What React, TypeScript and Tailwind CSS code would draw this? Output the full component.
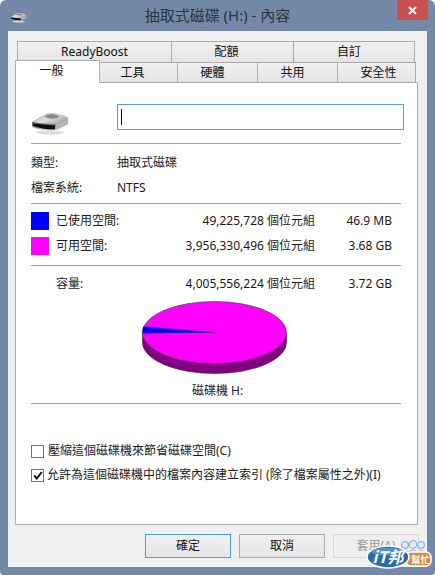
import React from "react";

const font = { fontFamily: '"Noto Sans", "Noto Sans CJK TC", sans-serif' };

function Drive({ w, h }: { w: number; h: number }) {
  return (
    <svg width={w} height={h} viewBox="0 0 38 26">
      <defs>
        <linearGradient id="dt" x1="0" y1="0" x2="1" y2="0.6">
          <stop offset="0" stopColor="#a0a0a0" />
          <stop offset="0.55" stopColor="#e0e0e0" />
          <stop offset="1" stopColor="#a8a8a8" />
        </linearGradient>
        <linearGradient id="df" x1="0" y1="0" x2="0" y2="1">
          <stop offset="0" stopColor="#a0a0a0" />
          <stop offset="0.5" stopColor="#5a5a5a" />
          <stop offset="1" stopColor="#c4c4c4" />
        </linearGradient>
        <filter id="db" x="-10%" y="-10%" width="120%" height="120%">
          <feGaussianBlur stdDeviation="0.35" />
        </filter>
      </defs>
      <g filter="url(#db)">
        <ellipse cx="19" cy="23.5" rx="14" ry="2" fill="#dcdcdc" />
        <path d="M1 13 L17 4 Q30 4 37 9 L37 15 L25 21 Q12 22 1 18 Z" fill="url(#df)" />
        <path d="M1 13 L17 4 Q30 4 37 9 L25 15 Q12 15 1 13 Z" fill="url(#dt)" />
        <path d="M25 15 L37 9 L37 15 L25 21 Z" fill="#b4b4b4" />
        <path d="M2 14.5 L24 16.5 L24 20.5 Q12 20.5 2 17 Z" fill="#0c0c0c" />
        <ellipse cx="21" cy="7.5" rx="7" ry="2.2" fill="#8a8b8b" />
      </g>
    </svg>
  );
}

function Pie() {
  return (
    <svg width="146" height="74" viewBox="0 0 146 74">
      <path d="M0.5 31.5 V41.5 A72 31 0 0 0 144.5 41.5 V31.5 Z" fill="#800080" stroke="#4a2a4a" strokeWidth="0.7" />
      <ellipse cx="72.5" cy="31.5" rx="72" ry="31" fill="#ff00ff" stroke="#5a4a5a" strokeWidth="0.7" />
      <path d="M72.5 31.5 L1.2 25.5 A72 31 0 0 0 0.6 32.5 Z" fill="#0000ff" />
      <path d="M72.5 31.5 L1.2 25.5" stroke="#3a3a6a" strokeWidth="0.5" />
      <path d="M72.5 31.5 L0.6 31.5" stroke="#3a3a6a" strokeWidth="0.5" />
    </svg>
  );
}

function Badge() {
  return (
    <svg width="68" height="36" viewBox="0 0 68 36">
      <g fill="#e3edf8" stroke="#8fb2d8" strokeWidth="1.2">
        <circle cx="39" cy="6" r="3.4" />
        <circle cx="47" cy="5.5" r="3.8" />
        <circle cx="55" cy="6" r="3.4" />
        <path d="M34 15 q5 -7 10 0 Z" />
        <path d="M42 15 q5 -8 10 0 Z" />
        <path d="M50 15 q5 -7 10 0 Z" />
      </g>
      <rect x="40" y="13" width="25" height="14" rx="5" fill="#d98a3c" stroke="#ffffff" strokeWidth="1.5" />
      <text x="54.5" y="24" textAnchor="middle" fontSize="9.5" fontWeight="700" fill="#ffffff" fontFamily='"Noto Sans CJK TC", sans-serif'>幫忙</text>
      <ellipse cx="22" cy="18" rx="21" ry="11" fill="#2a6ca8" stroke="#ffffff" strokeWidth="1.6" />
      <ellipse cx="21" cy="12.5" rx="16" ry="4" fill="#6ea6d8" opacity="0.6" />
      <text x="22" y="24" textAnchor="middle" fontSize="16" fontWeight="700" fontStyle="italic" fill="#ffffff" fontFamily='"Noto Sans CJK TC", sans-serif'>iT邦</text>
    </svg>
  );
}

const Sep = () => <div className="h-px bg-[#a0a0a0] mr-[16px]" />;

function Row({ color, label, bytes, size }: { color?: string; label: string; bytes: string; size: string }) {
  return (
    <div className="flex items-center h-[18px] text-[12px] text-[#1a1a1a]">
      <div className="w-[18px] h-[18px] shrink-0" style={color ? { backgroundColor: color } : undefined} />
      <div className="ml-[7px] w-[100px]">{label}</div>
      <div className="w-[159px] text-right whitespace-nowrap">{bytes}</div>
      <div className="w-[77px] text-right">{size}</div>
    </div>
  );
}

function Tab({ w, label, className = "" }: { w: string; label: string; className?: string }) {
  return (
    <div className={`${w} flex items-center justify-center border border-b-0 border-[#acacac] bg-gradient-to-b from-[#f0f0f0] to-[#e5e5e5] text-[12px] text-[#111] ${className}`}>
      {label}
    </div>
  );
}

function Btn({ label, className = "" }: { label: string; className?: string }) {
  return (
    <div className={`w-[86px] h-[24px] flex items-center justify-center border text-[12px] ${className}`}>
      {label}
    </div>
  );
}

export default function App() {
  return (
    <div style={font} className="relative w-[435px] h-[575px] bg-white overflow-hidden">
      <div className="w-[435px] h-[575px] bg-[#7389a7] rounded-t-[6px] rounded-b-[4px] px-[8px] pb-[8px] flex flex-col">
        <div className="relative h-[31px] shrink-0 flex items-center justify-center text-[15px] text-[#2b3540]">
          <div className="absolute left-[2px] top-[11px]"><Drive w={17} h={12} /></div>
          <span className="mt-[-1px]">抽取式磁碟 (H:) - 內容</span>
          <div className="absolute right-[-1px] top-0 w-[31px] h-[20px] bg-[#c75050] flex items-center justify-center">
            <svg width="9" height="9" viewBox="0 0 9 9"><path d="M1 1 L8 8 M8 1 L1 8" stroke="#fff" strokeWidth="2" /></svg>
          </div>
        </div>

        <div className="flex-1 bg-[#f0f0f0] flex flex-col px-[7px]">
          <div className="h-[10px] shrink-0" />
          <div className="flex h-[21px] pl-[2px] shrink-0">
            <Tab w="w-[155px]" label="ReadyBoost" />
            <Tab w="w-[123px] -ml-px" label="配額" className="pr-[12px]" />
            <Tab w="w-[122px] -ml-px" label="自訂" className="pr-[10px]" />
          </div>
          <div className="flex h-[20px] shrink-0 relative">
            <div className="relative z-10 w-[85px] h-[23px] -mt-[2px] pb-[3px] pr-[12px] flex items-center justify-center border border-b-0 border-[#acacac] bg-white text-[12px] text-[#111]">一般</div>
            <Tab w="w-[79px] -ml-px" label="工具" className="pr-[12px]" />
            <Tab w="w-[81px] -ml-px" label="硬體" className="pr-[10px]" />
            <Tab w="w-[81px] -ml-px" label="共用" className="pr-[10px]" />
            <Tab w="w-[79px] -ml-px" label="安全性" className="pl-[4px]" />
          </div>

          <div className="w-[403px] h-[443px] shrink-0 border border-[#acacac] bg-white pl-[15px] flex flex-col text-[12px] text-[#1a1a1a]">
            <div className="flex h-[60px] shrink-0 pt-[21px]">
              <div className="w-[86px] pt-[5px]"><Drive w={38} h={26} /></div>
              <div className="w-[287px] h-[26px] border border-[#569de5] flex items-center pl-[3px]">
                <div className="w-px h-[16px] bg-black" />
              </div>
            </div>
            <Sep />
            <div className="flex h-[25px] mt-[6px] items-center"><div className="w-[86px]">類型:</div><div>抽取式磁碟</div></div>
            <div className="flex h-[25px] items-center"><div className="w-[86px]">檔案系統:</div><div>NTFS</div></div>
            <div className="h-[3px]" />
            <Sep />
            <div className="mt-[8px]"><Row color="#0000ff" label="已使用空間:" bytes="49,225,728 個位元組" size="46.9 MB" /></div>
            <div className="mt-[7px]"><Row color="#ff00ff" label="可用空間:" bytes="3,956,330,496 個位元組" size="3.68 GB" /></div>
            <div className="h-[10px]" />
            <Sep />
            <div className="mt-[9px]"><Row label="容量:" bytes="4,005,556,224 個位元組" size="3.72 GB" /></div>
            <div className="flex justify-center mr-[16px] mt-[8px] h-[74px] pr-[3px]"><Pie /></div>
            <div className="text-center mr-[16px] mt-[7px] h-[18px] leading-[18px] pl-[3px]">磁碟機 H:</div>
            <div className="h-[3px]" />
            <Sep />
            <div className="flex items-center h-[14px] mt-[40px]">
              <div className="w-[13px] h-[13px] border border-[#707070] bg-white" />
              <div className="ml-[4px]">壓縮這個磁碟機來節省磁碟空間(C)</div>
            </div>
            <div className="flex items-center h-[14px] mt-[10px]">
              <div className="w-[13px] h-[13px] border border-[#707070] bg-white flex items-center justify-center">
                <svg width="10" height="9" viewBox="0 0 10 9"><path d="M1.2 4.5 L3.8 7.4 L8.8 1" fill="none" stroke="#111" strokeWidth="2" /></svg>
              </div>
              <div className="ml-[3px] whitespace-nowrap">允許為這個磁碟機中的檔案內容建立索引 (除了檔案屬性之外)(I)</div>
            </div>
          </div>

          <div className="flex justify-end gap-[8px] mt-[9px] mr-[1px]">
            <Btn label="確定" className="border-[#4b9be0] text-[#111] bg-gradient-to-b from-[#f0f0f0] to-[#e5e5e5]" />
            <Btn label="取消" className="border-[#acacac] text-[#111] bg-gradient-to-b from-[#f0f0f0] to-[#e5e5e5]" />
            <Btn label="套用(A)" className="border-[#d9d9d9] text-[#9a9a9a] bg-[#efefef]" />
          </div>
        </div>
      </div>
      <div className="absolute left-[366px] top-[539px]"><Badge /></div>
    </div>
  );
}
